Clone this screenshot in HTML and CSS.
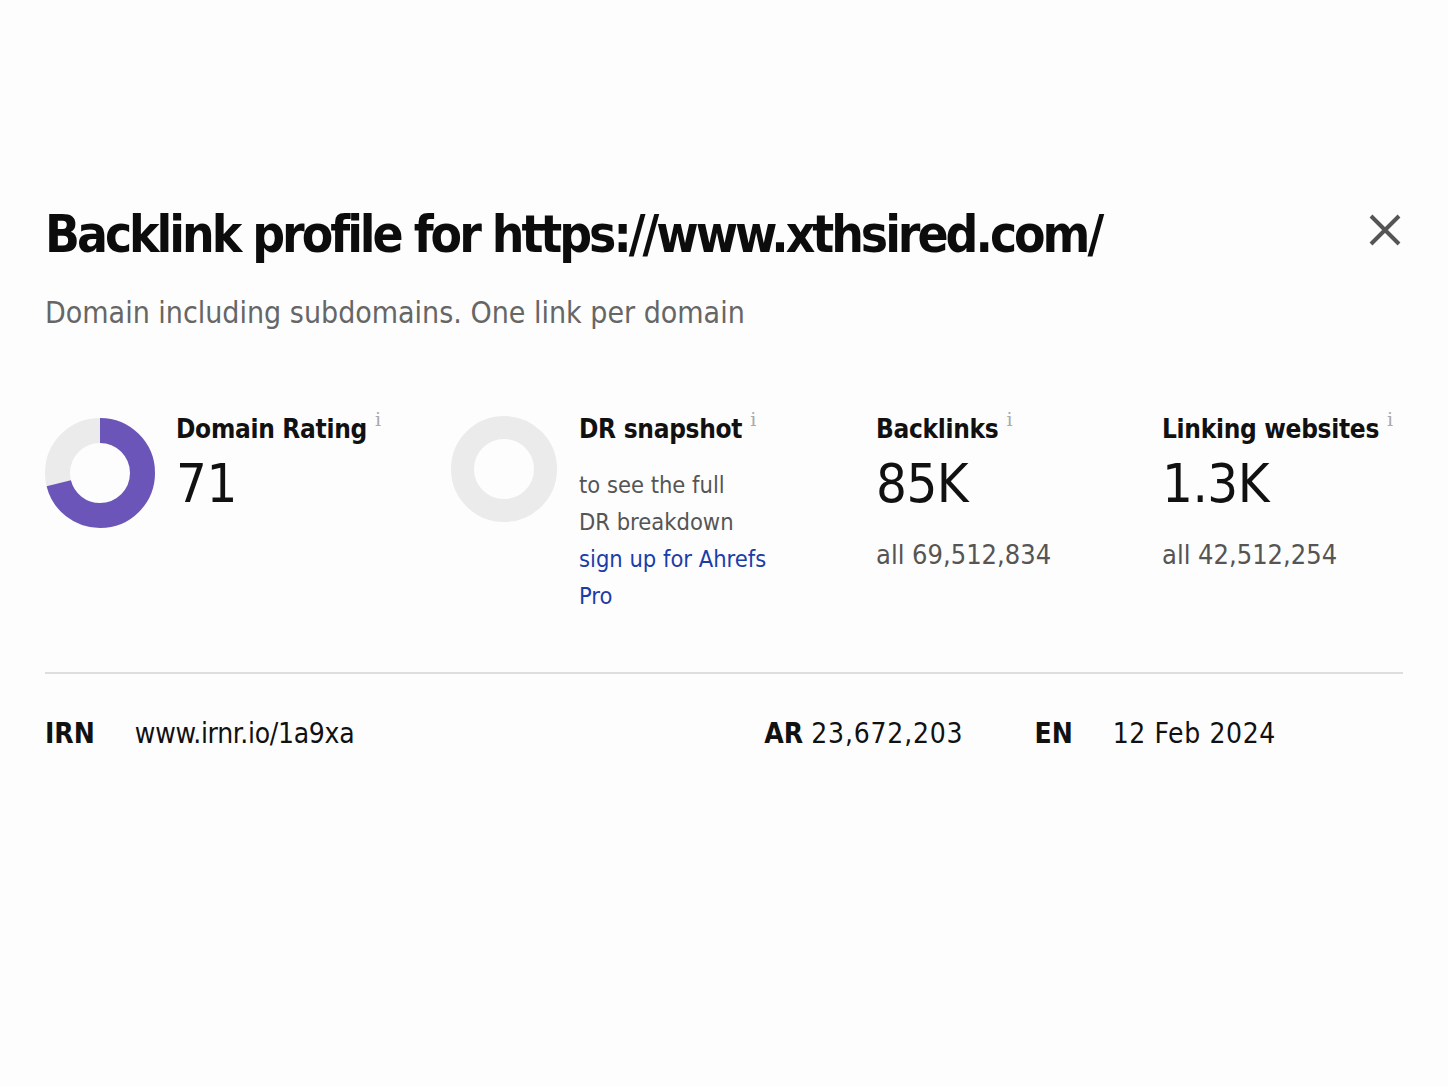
FILE: index.html
```html
<!DOCTYPE html>
<html lang="en">
<head>
<meta charset="utf-8">
<title>Backlink profile</title>
<link rel="stylesheet" href="styles.css">
</head>
<body>
<main class="panel">
  <header class="head">
    <h1 class="title">Backlink profile for https://www.xthsired.com/</h1>
    <button class="close" aria-label="Close">
      <svg viewBox="0 0 32 32" width="32" height="32"><path d="M2 2 L30 30 M30 2 L2 30" stroke="#555" stroke-width="4" fill="none"/></svg>
    </button>
  </header>
  <p class="subtitle">Domain including subdomains. One link per domain</p>

  <section class="stats">
    <div class="stat stat-dr">
      <svg class="donut" viewBox="0 0 110 114" width="110" height="114">
        <circle cx="55" cy="57" r="42.5" fill="none" stroke="#ebebeb" stroke-width="25"/>
        <circle cx="55" cy="57" r="42.5" fill="none" stroke="#6c55b9" stroke-width="25"
          stroke-dasharray="189.6 267.0" transform="rotate(-90 55 57)"/>
      </svg>
      <div class="stat-body">
        <div class="label">Domain Rating<sup class="info">i</sup></div>
        <div class="value">71</div>
      </div>
    </div>
    <div class="stat stat-snap">
      <svg class="donut" viewBox="0 0 106 108" width="106" height="108">
        <circle cx="53" cy="54" r="41.5" fill="none" stroke="#ebebeb" stroke-width="23"/>
      </svg>
      <div class="stat-body">
        <div class="label">DR snapshot<sup class="info">i</sup></div>
        <p class="note">to see the full<br>DR breakdown<br><a class="link" href="#">sign up for Ahrefs<br>Pro</a></p>
      </div>
    </div>
    <div class="stat">
      <div class="stat-body">
        <div class="label">Backlinks<sup class="info">i</sup></div>
        <div class="value">85K</div>
        <div class="all">all 69,512,834</div>
      </div>
    </div>
    <div class="stat">
      <div class="stat-body">
        <div class="label">Linking websites<sup class="info">i</sup></div>
        <div class="value">1.3K</div>
        <div class="all">all 42,512,254</div>
      </div>
    </div>
  </section>

  <hr class="divider">

  <section class="meta">
    <span class="key">IRN</span>
    <span class="val url">www.irnr.io/1a9xa</span>
    <span class="ar"><span class="key">AR</span> <span class="num">23,672,203</span></span>
    <span class="key en">EN</span>
    <span class="val date">12 Feb 2024</span>
  </section>
</main>
</body>
</html>
```

FILE: styles.css
```css
html, body {
  margin: 0;
  background: #fdfdfd;
}
body {
  font-family: "DejaVu Sans Condensed", "DejaVu Sans", sans-serif;
  color: #111;
}
.panel {
  padding: 200px 45px 0 45px;
}
.head {
  display: flex;
  align-items: center;
  justify-content: space-between;
}
.title {
  margin: 0;
  font-size: 51px;
  font-weight: 700;
  line-height: 70px;
  letter-spacing: -3px;
  word-spacing: 0;
  color: #0c0c0c;
}
.close {
  border: 0;
  background: none;
  padding: 0;
  margin-right: 2px;
  margin-top: -10px;
  width: 32px;
  height: 32px;
  cursor: pointer;
}
.subtitle {
  margin: 23px 0 0 0;
  font-size: 30px;
  line-height: 40px;
  color: #666;
}
.stats {
  display: grid;
  grid-template-columns: 406px 425px 286px 1fr;
  margin-top: 78px;
}
.stat {
  display: flex;
  align-items: flex-start;
}
.stat-dr .donut { margin-top: 5px; margin-right: 21px; }
.stat-snap .donut { margin-top: 4px; margin-right: 22px; }
.label {
  font-size: 26px;
  font-weight: 700;
  line-height: 36px;
  letter-spacing: -0.3px;
  white-space: nowrap;
  color: #111;
}
.info {
  font-family: "DejaVu Serif", serif;
  font-weight: 400;
  font-size: 19px;
  color: #aaa;
  margin-left: 8px;
  vertical-align: 12px;
  line-height: 0;
}
.value {
  margin-top: 4px;
  font-size: 54px;
  line-height: 66px;
  font-weight: 400;
  letter-spacing: -0.5px;
  color: #111;
}
.all {
  margin-top: 20px;
  font-size: 27px;
  line-height: 36px;
  color: #555;
}
.note {
  margin: 20px 0 0 0;
  font-size: 23.5px;
  line-height: 37px;
  color: #555;
}
.link {
  color: #1a3daa;
  text-decoration: none;
}
.divider {
  margin: 57px 0 0 0;
  border: 0;
  border-top: 2px solid #dedede;
}
.meta {
  display: flex;
  align-items: baseline;
  margin-top: 40px;
  font-size: 28px;
  line-height: 40px;
  color: #111;
}
.key {
  font-weight: 700;
}
.url {
  margin-left: 40px;
  letter-spacing: -0.3px;
}
.ar { margin-left: 410px; }
.num { letter-spacing: 0.8px; }
.en {
  margin-left: 71px;
}
.date {
  margin-left: 40px;
  letter-spacing: 0.6px;
}
```
